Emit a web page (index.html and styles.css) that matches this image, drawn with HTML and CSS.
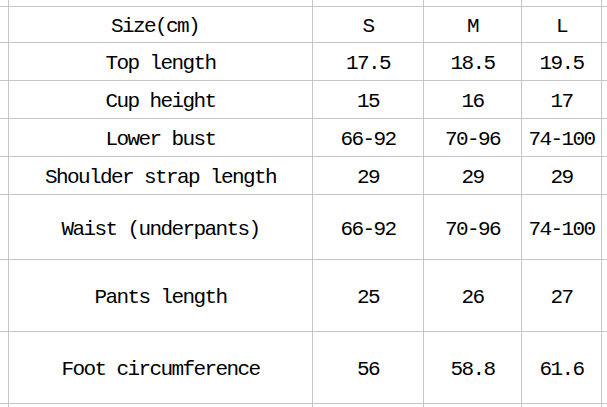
FILE: index.html
```html
<!DOCTYPE html>
<html>
<head>
<meta charset="utf-8">
<link rel="stylesheet" href="styles.css">
</head>
<body>
<div class="sheet">
  <div class="cell"></div><div class="cell"></div><div class="cell"></div><div class="cell"></div><div class="cell"></div><div class="cell"></div>

  <div class="cell"></div><div class="cell label">Size(cm)&nbsp;</div><div class="cell">S</div><div class="cell">M</div><div class="cell">L</div><div class="cell"></div>

  <div class="cell"></div><div class="cell label">Top length</div><div class="cell">17.5</div><div class="cell">18.5</div><div class="cell">19.5</div><div class="cell"></div>

  <div class="cell"></div><div class="cell label">Cup height</div><div class="cell">15</div><div class="cell">16</div><div class="cell">17</div><div class="cell"></div>

  <div class="cell"></div><div class="cell label">Lower bust</div><div class="cell">66-92</div><div class="cell">70-96</div><div class="cell">74-100</div><div class="cell"></div>

  <div class="cell"></div><div class="cell label">Shoulder strap length</div><div class="cell">29</div><div class="cell">29</div><div class="cell">29</div><div class="cell"></div>

  <div class="cell"></div><div class="cell label">Waist (underpants)</div><div class="cell">66-92</div><div class="cell">70-96</div><div class="cell">74-100</div><div class="cell"></div>

  <div class="cell"></div><div class="cell label">Pants length</div><div class="cell">25</div><div class="cell">26</div><div class="cell">27</div><div class="cell"></div>

  <div class="cell"></div><div class="cell label">Foot circumference</div><div class="cell">56</div><div class="cell">58.8</div><div class="cell">61.6</div><div class="cell"></div>

  <div class="cell"></div><div class="cell"></div><div class="cell"></div><div class="cell"></div><div class="cell"></div><div class="cell"></div>
</div>
</body>
</html>
```
FILE: styles.css
```css
html, body {
  margin: 0;
  padding: 0;
  background: #ffffff;
  overflow: hidden;
}

.sheet {
  width: 607px;
  height: 407px;
  display: grid;
  grid-template-columns: 8px 303px 110px 97px 79px 5px;
  grid-template-rows: 6px 35px 37px 37px 37px 37px 64px 71px 71px 3px;
  gap: 1px;
  background: #c6c6c6;
  font-family: "Liberation Mono", "DejaVu Sans Mono", monospace;
  font-size: 21px;
  letter-spacing: -1.6px;
  color: #000000;
}

.cell {
  background: #ffffff;
  display: flex;
  align-items: center;
  justify-content: center;
  padding-top: 4px;
  box-sizing: border-box;
  white-space: nowrap;
  overflow: hidden;
}
```
